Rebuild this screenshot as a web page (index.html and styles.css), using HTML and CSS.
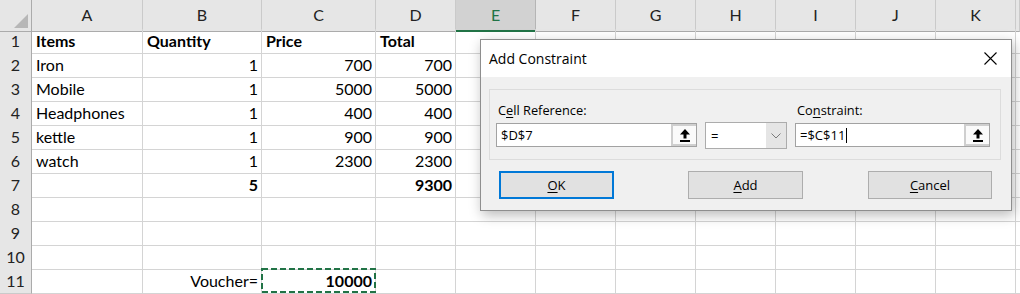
FILE: index.html
```html
<!DOCTYPE html>
<html>
<head>
<meta charset="utf-8">
<link rel="stylesheet" href="styles.css">
</head>
<body>
<div class="sheet">
  <div class="row hdr">
    <div class="corner"><span class="tri"></span></div>
    <div class="ch">A</div><div class="ch">B</div><div class="ch">C</div><div class="ch">D</div>
    <div class="ch sel">E</div><div class="ch">F</div><div class="ch">G</div><div class="ch">H</div>
    <div class="ch">I</div><div class="ch">J</div><div class="ch">K</div><div class="ch"></div>
  </div>
  <div class="row">
    <div class="rh">1</div>
    <div class="c b">Items</div><div class="c b">Quantity</div><div class="c b">Price</div><div class="c b">Total</div>
    <div class="c"></div><div class="c"></div><div class="c"></div><div class="c"></div><div class="c"></div><div class="c"></div><div class="c"></div><div class="c"></div>
  </div>
  <div class="row">
    <div class="rh">2</div>
    <div class="c">Iron</div><div class="c r">1</div><div class="c r">700</div><div class="c r">700</div>
    <div class="c"></div><div class="c"></div><div class="c"></div><div class="c"></div><div class="c"></div><div class="c"></div><div class="c"></div><div class="c"></div>
  </div>
  <div class="row">
    <div class="rh">3</div>
    <div class="c">Mobile</div><div class="c r">1</div><div class="c r">5000</div><div class="c r">5000</div>
    <div class="c"></div><div class="c"></div><div class="c"></div><div class="c"></div><div class="c"></div><div class="c"></div><div class="c"></div><div class="c"></div>
  </div>
  <div class="row">
    <div class="rh">4</div>
    <div class="c">Headphones</div><div class="c r">1</div><div class="c r">400</div><div class="c r">400</div>
    <div class="c"></div><div class="c"></div><div class="c"></div><div class="c"></div><div class="c"></div><div class="c"></div><div class="c"></div><div class="c"></div>
  </div>
  <div class="row">
    <div class="rh">5</div>
    <div class="c">kettle</div><div class="c r">1</div><div class="c r">900</div><div class="c r">900</div>
    <div class="c"></div><div class="c"></div><div class="c"></div><div class="c"></div><div class="c"></div><div class="c"></div><div class="c"></div><div class="c"></div>
  </div>
  <div class="row">
    <div class="rh">6</div>
    <div class="c">watch</div><div class="c r">1</div><div class="c r">2300</div><div class="c r">2300</div>
    <div class="c"></div><div class="c"></div><div class="c"></div><div class="c"></div><div class="c"></div><div class="c"></div><div class="c"></div><div class="c"></div>
  </div>
  <div class="row">
    <div class="rh">7</div>
    <div class="c"></div><div class="c r b">5</div><div class="c"></div><div class="c r b">9300</div>
    <div class="c"></div><div class="c"></div><div class="c"></div><div class="c"></div><div class="c"></div><div class="c"></div><div class="c"></div><div class="c"></div>
  </div>
  <div class="row">
    <div class="rh">8</div>
    <div class="c"></div><div class="c"></div><div class="c"></div><div class="c"></div>
    <div class="c"></div><div class="c"></div><div class="c"></div><div class="c"></div><div class="c"></div><div class="c"></div><div class="c"></div><div class="c"></div>
  </div>
  <div class="row">
    <div class="rh">9</div>
    <div class="c"></div><div class="c"></div><div class="c"></div><div class="c"></div>
    <div class="c"></div><div class="c"></div><div class="c"></div><div class="c"></div><div class="c"></div><div class="c"></div><div class="c"></div><div class="c"></div>
  </div>
  <div class="row">
    <div class="rh">10</div>
    <div class="c"></div><div class="c"></div><div class="c"></div><div class="c"></div>
    <div class="c"></div><div class="c"></div><div class="c"></div><div class="c"></div><div class="c"></div><div class="c"></div><div class="c"></div><div class="c"></div>
  </div>
  <div class="row">
    <div class="rh">11</div>
    <div class="c"></div><div class="c r">Voucher=</div>
    <div class="c r b copy">10000<svg class="ants" width="115" height="25" viewBox="0 0 115 25"><rect x="1" y="1" width="113" height="23" fill="none" stroke="#217346" stroke-width="2" stroke-dasharray="6 3"/></svg></div>
    <div class="c"></div>
    <div class="c"></div><div class="c"></div><div class="c"></div><div class="c"></div><div class="c"></div><div class="c"></div><div class="c"></div><div class="c"></div>
  </div>
</div>

<div class="dlg">
  <div class="title">
    <span>Add Constraint</span>
    <svg class="close" width="13" height="13" viewBox="0 0 13 13"><path d="M0.5 0.5 L12.5 12.5 M12.5 0.5 L0.5 12.5" stroke="#000" stroke-width="1.1" fill="none"/></svg>
  </div>
  <div class="body">
    <div class="group">
      <div class="field f1">
        <div class="lbl">C<u>e</u>ll Reference:</div>
        <div class="inp">
          <span class="val">$D$7</span>
          <div class="refbtn"><svg width="10" height="13" viewBox="0 0 10 13"><path d="M5 0 L10 5.5 L6.5 5.5 L6.5 9.5 L3.5 9.5 L3.5 5.5 L0 5.5 Z" fill="#000"/><rect x="0" y="11" width="10" height="2" fill="#000"/></svg></div>
        </div>
      </div>
      <div class="field f2">
        <div class="dd">
          <span class="val">=</span>
          <div class="ddbtn"><svg width="10" height="6" viewBox="0 0 10 6"><path d="M0.5 0.5 L5 5 L9.5 0.5" stroke="#7a7a7a" stroke-width="1" fill="none"/></svg></div>
        </div>
      </div>
      <div class="field f3">
        <div class="lbl">Co<u>n</u>straint:</div>
        <div class="inp">
          <span class="val">=$C$11<i class="caret"></i></span>
          <div class="refbtn"><svg width="10" height="13" viewBox="0 0 10 13"><path d="M5 0 L10 5.5 L6.5 5.5 L6.5 9.5 L3.5 9.5 L3.5 5.5 L0 5.5 Z" fill="#000"/><rect x="0" y="11" width="10" height="2" fill="#000"/></svg></div>
        </div>
      </div>
    </div>
    <div class="btns">
      <div class="btn ok"><u>O</u>K</div>
      <div class="btn add"><u>A</u>dd</div>
      <div class="btn cancel"><u>C</u>ancel</div>
    </div>
  </div>
</div>
</body>
</html>
```

FILE: styles.css
```css
html, body {
  margin: 0;
  padding: 0;
  background: #fff;
  overflow: hidden;
}
body {
  width: 1020px;
  height: 294px;
  position: relative;
  font-family: Lato, "Liberation Sans", sans-serif;
}
.sheet {
  display: flex;
  flex-direction: column;
}
.row {
  display: grid;
  grid-template-columns: 32px 111px 119px 114px 80px 80px 80px 80px 80px 80px 80px 80px 1fr;
  height: 24px;
}
.row.hdr {
  height: 29px;
}
.corner {
  background: #e6e6e6;
  border-right: 1px solid #ababab;
  border-bottom: 1px solid #ababab;
  position: relative;
  box-sizing: border-box;
}
.tri {
  position: absolute;
  right: 3px;
  bottom: 3px;
  width: 0;
  height: 0;
  border-left: 14px solid transparent;
  border-bottom: 14px solid #b7b7b7;
}
.ch {
  background: #e6e6e6;
  border-right: 1px solid #cacaca;
  border-bottom: 1px solid #ababab;
  box-sizing: border-box;
  text-align: center;
  font-size: 16px;
  line-height: 30px;
  color: #222;
}
.ch.sel {
  background: #d2d2d2;
  color: #217346;
  border-bottom: 2px solid #217346;
  border-right-color: #b5b5b5;
}
.rh {
  background: #e6e6e6;
  border-right: 1px solid #ababab;
  border-bottom: 1px solid #cacaca;
  box-sizing: border-box;
  text-align: center;
  font-size: 16px;
  line-height: 24px;
  color: #222;
}
.c {
  border-right: 1px solid #d4d4d4;
  border-bottom: 1px solid #d4d4d4;
  box-sizing: border-box;
  padding: 0 3px 0 4px;
  font-size: 16px;
  line-height: 24px;
  white-space: nowrap;
  color: #000;
}
.r { text-align: right; }
.b { font-weight: bold; }
.copy {
  position: relative;
}
.ants {
  position: absolute;
  left: -1px;
  top: -1px;
}

/* dialog */
.dlg {
  position: absolute;
  left: 480px;
  top: 39px;
  width: 532px;
  height: 172px;
  box-sizing: border-box;
  border: 1px solid #8e8e8e;
  background: #f0f0f0;
  box-shadow: 2px 4px 12px rgba(0, 0, 0, 0.28);
  font-family: "Open Sans", "Noto Sans", sans-serif;
  color: #000;
  display: flex;
  flex-direction: column;
}
.title {
  height: 37px;
  background: #fff;
  display: flex;
  align-items: center;
  justify-content: space-between;
  padding: 0 14px 0 8px;
  font-size: 14px;
}
.close {
  display: block;
}
.body {
  padding: 12px 10px 0 8px;
}
.group {
  height: 71px;
  box-sizing: border-box;
  border: 1px solid #dcdcdc;
  padding: 12px 0 0 6px;
  display: flex;
  gap: 8px;
  align-items: flex-start;
}
.field {
  display: flex;
  flex-direction: column;
}
.f1 { width: 201px; }
.f2 { width: 82px; padding-top: 20px; }
.f3 { width: 195px; }
.lbl {
  height: 20px;
  padding-left: 2px;
  font-size: 12.8px;
  line-height: 17px;
}
.lbl u, .btn u {
  text-decoration-thickness: 1px;
  text-underline-offset: 2px;
}
.inp {
  margin-top: 1px;
  height: 24px;
  box-sizing: border-box;
  border: 1px solid #a2a2a2;
  background: #fff;
  display: flex;
  align-items: center;
}
.val {
  flex: 1;
  padding-left: 4px;
  font-size: 13px;
  display: flex;
  align-items: center;
}
.caret {
  display: inline-block;
  width: 1px;
  height: 15px;
  background: #000;
  margin-left: 1px;
}
.refbtn {
  width: 25px;
  height: 22px;
  box-sizing: border-box;
  border: 2px solid #cfcfcf;
  border-right: none;
  background: #fafafa;
  display: flex;
  align-items: center;
  justify-content: center;
}
.refbtn svg { display: block; }
.dd {
  height: 27px;
  box-sizing: border-box;
  border: 1px solid #acacac;
  background: #fff;
  display: flex;
  align-items: center;
}
.dd .val { padding-left: 5px; }
.ddbtn {
  width: 20px;
  height: 25px;
  background: #e5e5e5;
  display: flex;
  align-items: center;
  justify-content: center;
}
.btns {
  display: flex;
  margin-top: 11px;
  padding-left: 10px;
}
.btn {
  height: 28px;
  box-sizing: border-box;
  border: 1px solid #adadad;
  background: #e1e1e1;
  display: flex;
  align-items: center;
  justify-content: center;
  font-size: 13px;
}
.btn.ok {
  width: 115px;
  border: 2px solid #0078d7;
}
.btn.add {
  width: 115px;
  margin-left: 74px;
}
.btn.cancel {
  width: 124px;
  margin-left: 65px;
}
```
